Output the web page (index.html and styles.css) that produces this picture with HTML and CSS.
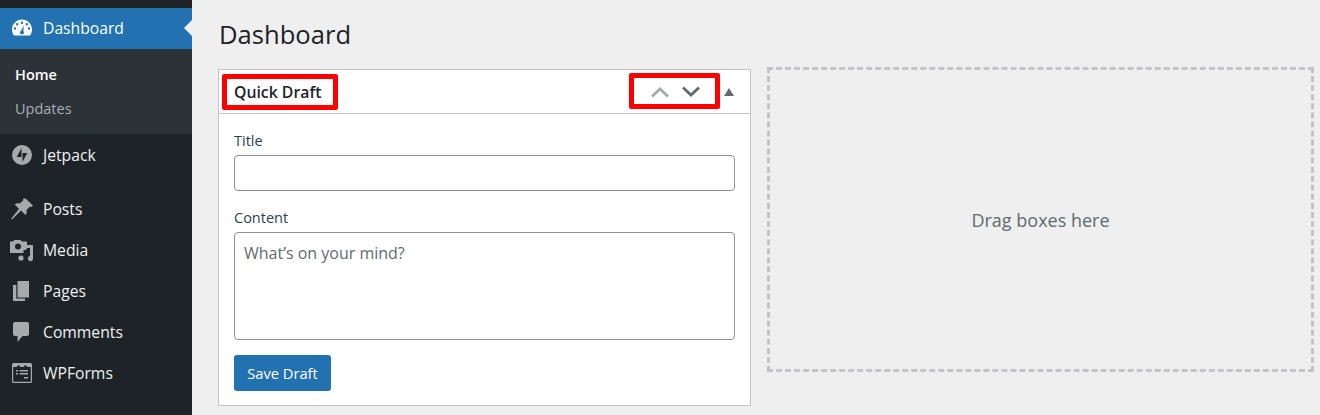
FILE: index.html
```html
<!DOCTYPE html>
<html lang="en">
<head>
  <meta charset="UTF-8">
  <title>Dashboard</title>
  <link rel="stylesheet" href="styles.css">
</head>
<body>
  <div class="sidebar">
    <div class="menu-item active">
      <svg class="icon" viewBox="0 0 20 20"><path fill-rule="evenodd" d="M10 1.500C4.500 1.500 0 6 0 11.500c0 2.300.8 4.400 2 6h16c1.300-1.600 2-3.700 2-6 0-5.500-4.500-10-10-10zM10 3.500a1.200 1.200 0 1 1 0 2.400 1.200 1.200 0 0 1 0-2.400zM5.200 5a1.200 1.200 0 1 1 0 2.400 1.200 1.200 0 0 1 0-2.400zM14.800 5a1.200 1.200 0 1 1 0 2.400 1.200 1.200 0 0 1 0-2.400zM3 9.300a1.200 1.200 0 1 1 0 2.400 1.200 1.200 0 0 1 0-2.400zM17 9.300a1.200 1.200 0 1 1 0 2.400 1.200 1.200 0 0 1 0-2.400zM11.800 7.500l-.5 5.600c.4.400.7.900.7 1.400a2 2 0 1 1-4 0c0-.7.400-1.300 1-1.700z"/></svg>
      <span>Dashboard</span>
    </div>
    <div class="submenu">
      <div class="sub-link current">Home</div>
      <div class="sub-link">Updates</div>
    </div>
    <div class="menu-item jetpack">
      <svg class="icon" viewBox="0 0 20 20"><path fill-rule="evenodd" d="M10 0a10 10 0 1 0 0 20 10 10 0 0 0 0-20zM9.500 3v9H4.800zM10.500 17V8h4.700z"/></svg>
      <span>Jetpack</span>
    </div>
    <div class="menu-group">
      <div class="menu-item">
        <svg class="icon" viewBox="0 0 20 20"><path d="M13.500-.5l7.500 7-1.500 1.500-1.500-.4-3.500 3.400c.6 2 .2 3.700-1 5L9 11.500 0 20.500l-.8-.7 7.800-10-4.300-4.300c1.400-1.200 3.200-1.500 5.200-.9l3.400-3.400-.3-1.500z"/></svg>
        <span>Posts</span>
      </div>
      <div class="menu-item">
        <svg class="icon" viewBox="0 0 20 20"><path fill-rule="evenodd" d="M-2 1.500h3L2.500 0h6L10 1.500h5V9h-3.500v4H-2zM6 3.500a3 3 0 1 0 0 6 3 3 0 0 0 0-6z"/><path d="M11 5h10v13.500a2.600 2.600 0 1 1-3-2.500V8h-4v2h-3zM9 15.400a2.600 2.600 0 1 0 0 5.200 2.600 2.600 0 0 0 0-5.200z"/></svg>
        <span>Media</span>
      </div>
      <div class="menu-item">
        <svg class="icon" viewBox="0 0 20 20"><path d="M5.500 0H17v16.500H5.500z"/><path d="M1 4h3.300v13.500H13V20H1z"/></svg>
        <span>Pages</span>
      </div>
      <div class="menu-item">
        <svg class="icon" viewBox="0 0 20 20"><path d="M3 0h12a2 2 0 0 1 2 2v10a2 2 0 0 1-2 2h-4.500L5.500 20v-6H3a2 2 0 0 1-2-2V2a2 2 0 0 1 2-2z"/></svg>
        <span>Comments</span>
      </div>
      <div class="menu-item">
        <svg class="icon" viewBox="0 0 20 20"><path fill-rule="evenodd" d="M1.500 0h17A1.500 1.500 0 0 1 20 1.500v17a1.500 1.500 0 0 1-1.500 1.500h-17A1.500 1.500 0 0 1 0 18.500v-17A1.500 1.500 0 0 1 1.500 0zM1.200 4v14.800h17.600V4h-3.300L13.300 2 11.500 4h-3L6.700 2 4.500 4zM4 7h2v1.500H4zM7.500 7H16v1.500H7.500zM4 10h2v1.500H4zM7.500 10H16v1.500H7.500zM12 14h4v1.500h-4z"/></svg>
        <span>WPForms</span>
      </div>
    </div>
  </div>

  <div class="main">
    <h1 class="page-title">Dashboard</h1>
    <div class="columns">
      <div class="postbox">
        <div class="postbox-header">
          <h2 class="postbox-title">Quick Draft</h2>
          <div class="handle-actions">
            <svg class="chevron up" viewBox="0 0 20 12"><path d="M2 10.500L10 3l8 7.500"/></svg>
            <svg class="chevron" viewBox="0 0 20 12"><path d="M2 1.500L10 9l8-7.500"/></svg>
            <span class="toggle-arrow"></span>
          </div>
          <span class="mark mark-title"></span>
          <span class="mark mark-arrows"></span>
        </div>
        <form class="draft-form">
          <label class="field-label" for="title">Title</label>
          <input class="field-input" type="text" id="title">
          <label class="field-label content-label" for="content">Content</label>
          <textarea class="field-area" id="content" placeholder="What’s on your mind?"></textarea>
          <button class="save-btn" type="button">Save Draft</button>
        </form>
      </div>
      <div class="dropzone">Drag boxes here</div>
    </div>
  </div>
</body>
</html>
```

FILE: styles.css
```css
* {
  box-sizing: border-box;
}
body {
  margin: 0;
  height: 415px;
  overflow: hidden;
  display: flex;
  background: #efefef;
  font-family: "Open Sans", "Noto Sans", sans-serif;
  color: #1d2327;
}
.sidebar {
  width: 192px;
  flex-shrink: 0;
  padding-top: 8px;
  background: #1d2327;
}
.menu-item {
  height: 41px;
  padding: 0 0 2px 12px;
  display: flex;
  align-items: center;
  gap: 11px;
  font-size: 15.700px;
  color: #f0f0f1;
}
.icon {
  width: 20px;
  height: 20px;
  fill: #a7aaad;
  flex-shrink: 0;
  overflow: visible;
}
.active {
  position: relative;
  background: #2271b1;
  color: #fff;
}
.active .icon {
  fill: #fff;
}
.active::after {
  content: "";
  position: absolute;
  right: 0;
  top: 12px;
  border: 8px solid transparent;
  border-right-color: #efefef;
}
.submenu {
  height: 85px;
  padding-top: 8px;
  background: #2c3338;
}
.sub-link {
  height: 34px;
  padding-left: 15px;
  display: flex;
  align-items: center;
  font-size: 14.500px;
  color: #a7aeb4;
}
.current {
  font-weight: 600;
  color: #fff;
}
.jetpack {
  margin-top: 1px;
}
.menu-group {
  margin-top: 13px;
}
.main {
  flex: 1;
  padding: 0 6px 0 26px;
}
.page-title {
  margin: 0;
  height: 67px;
  padding: 17px 0 0 1px;
  font-size: 25.600px;
  line-height: 36px;
  font-weight: 400;
}
.columns {
  display: flex;
  align-items: flex-start;
  gap: 16px;
}
.postbox {
  width: 533px;
  height: 337px;
  margin-top: 2px;
  background: #fff;
  border: 1px solid #c3c4c7;
}
.postbox-header {
  position: relative;
  height: 44px;
  padding: 0 16px 0 15px;
  display: flex;
  align-items: center;
  justify-content: space-between;
  border-bottom: 1px solid #c3c4c7;
}
.postbox-title {
  margin: 0;
  font-size: 15.800px;
  font-weight: 600;
}
.handle-actions {
  display: flex;
  align-items: center;
  gap: 11px;
}
.chevron {
  width: 20px;
  height: 12px;
  fill: none;
  stroke: #646970;
  stroke-width: 2.800;
}
.up {
  stroke: #a7aaad;
}
.toggle-arrow {
  margin-left: 12px;
  border: 5px solid transparent;
  border-top: 0;
  border-bottom: 8px solid #646970;
}
.mark {
  position: absolute;
  border: 5px solid #f00;
  border-radius: 2px;
}
.mark-title {
  left: 3px;
  top: 4px;
  width: 116px;
  height: 36px;
}
.mark-arrows {
  left: 410px;
  top: 3px;
  width: 91px;
  height: 36px;
}
.draft-form {
  padding: 17px 15px 0;
}
.field-label {
  display: block;
  font-size: 14.500px;
  line-height: 20px;
  color: #2c3f55;
}
.field-input,
.field-area {
  display: block;
  width: 100%;
  background: #fff;
  border: 1px solid #8c8f94;
  border-radius: 4px;
  font-family: inherit;
}
.field-input {
  height: 36px;
  margin-top: 4px;
}
.content-label {
  margin-top: 17px;
}
.field-area {
  height: 108px;
  margin-top: 4px;
  padding: 8px 9px;
  resize: none;
  font-size: 16px;
  line-height: 24px;
}
.field-area::placeholder {
  color: #646970;
  opacity: 1;
}
.save-btn {
  display: block;
  width: 97px;
  height: 36px;
  margin-top: 15px;
  padding: 0;
  background: #2271b1;
  border: 0;
  border-radius: 3px;
  font-family: inherit;
  font-size: 14.700px;
  color: #fff;
}
.dropzone {
  width: 547px;
  height: 305px;
  display: flex;
  align-items: center;
  justify-content: center;
  border: 3px dashed #c3c4c7;
  font-size: 18px;
  color: #646970;
}
```
